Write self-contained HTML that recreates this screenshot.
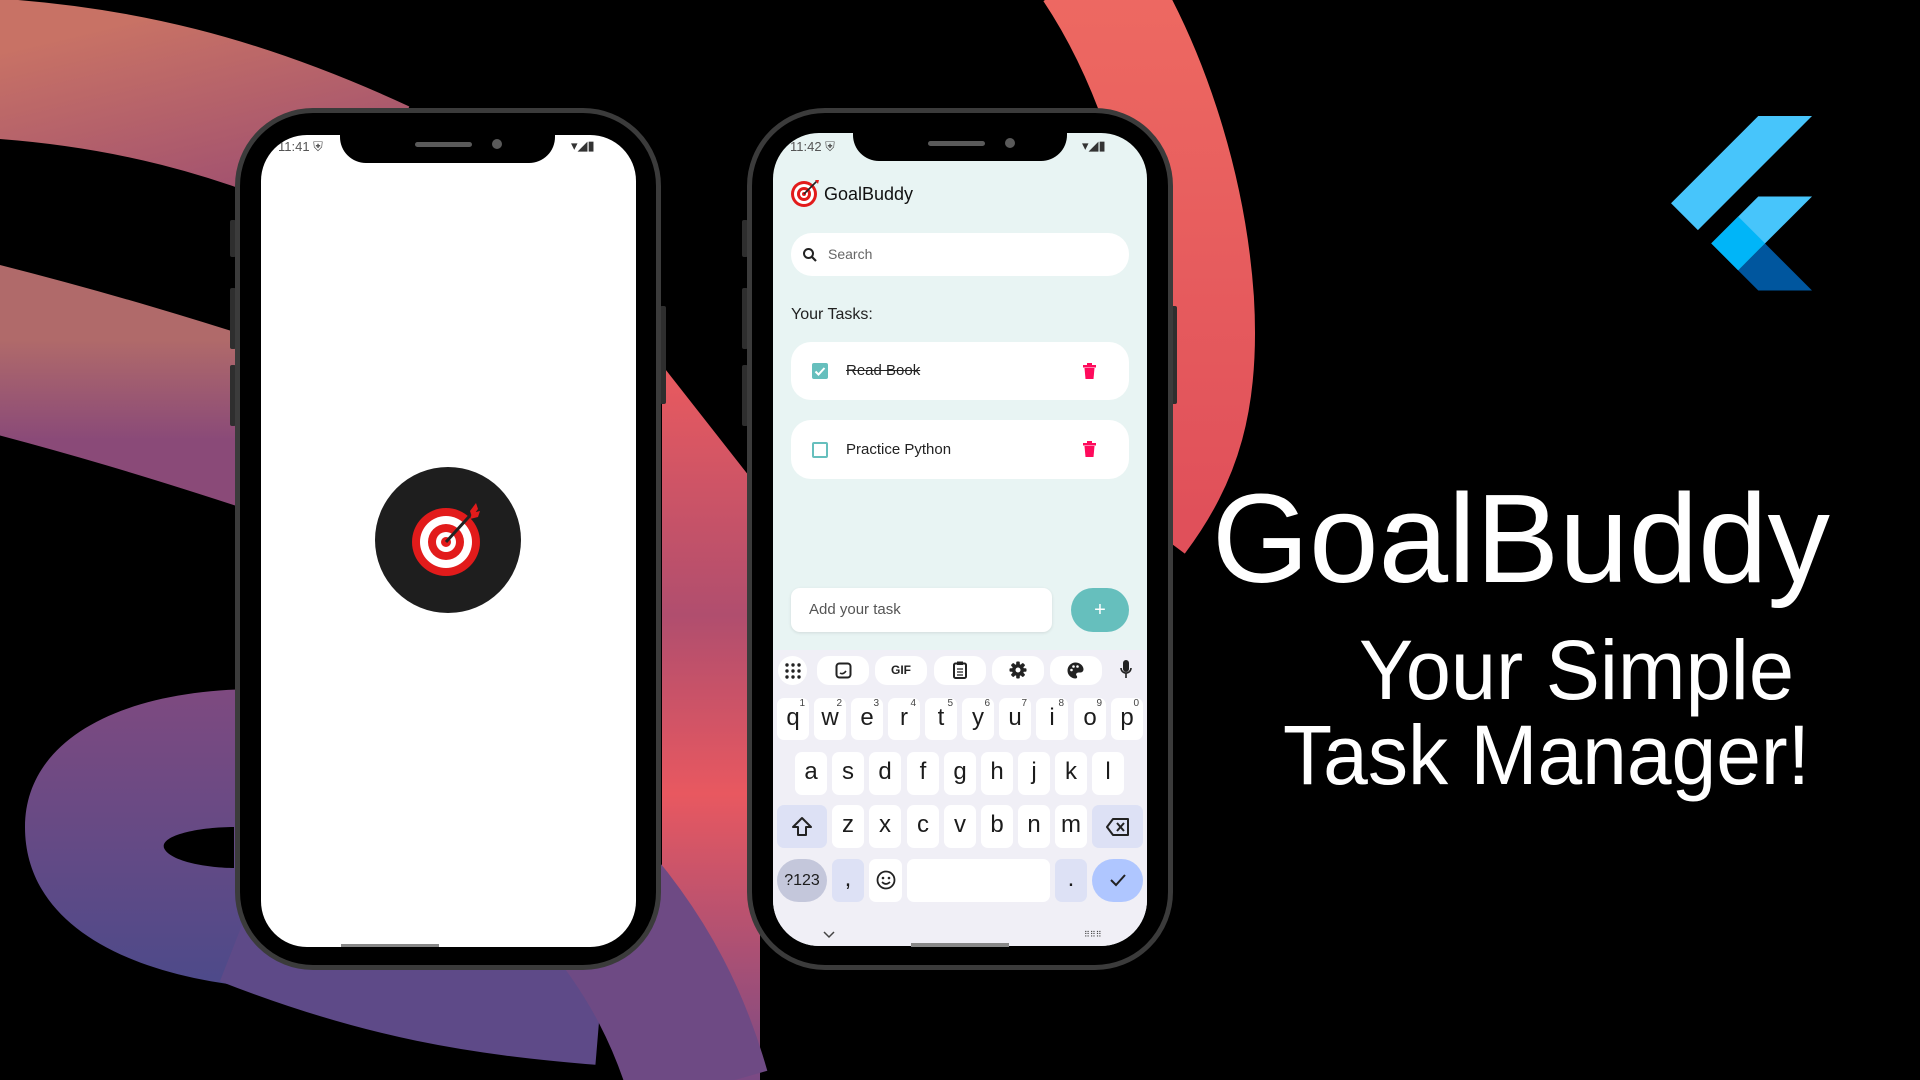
<!DOCTYPE html>
<html><head><meta charset="utf-8"><style>
*{margin:0;padding:0;box-sizing:border-box}
body{width:1920px;height:1080px;background:#000;position:relative;overflow:hidden;font-family:"Liberation Sans",sans-serif}
.abs{position:absolute;white-space:nowrap}
.phone{position:absolute;border:5px solid #3b3b3b;background:#000;border-radius:78px}
.btn{position:absolute;background:#2e2e2e;border-radius:2px}
.screen{position:absolute;overflow:hidden;border-radius:46px}
.notch{position:absolute;background:#000;border-radius:0 0 26px 26px}
.st{position:absolute;font-size:13px;color:#555;white-space:nowrap}
.key{position:absolute;background:#fff;border-radius:7px;text-align:center;font-size:24px;color:#1c1c1c;line-height:40px}
.key sup{position:absolute;top:1px;right:4px;font-size:10px;line-height:10px;color:#444}
.pill{position:absolute;background:#fff;border-radius:12px;top:656px;height:29px}
</style></head><body>
<svg class="abs" style="left:0;top:0" width="1920" height="1080">
<defs>
<linearGradient id="g1" x1="0" y1="0" x2="1" y2="1"><stop offset="0" stop-color="#c87265"/><stop offset="1" stop-color="#a05070"/></linearGradient>
<linearGradient id="g2" x1="0" y1="0" x2="0" y2="1"><stop offset="0" stop-color="#b06a6a"/><stop offset="1" stop-color="#8a4a78"/></linearGradient>
<linearGradient id="g3" x1="0" y1="0" x2="0" y2="1"><stop offset="0" stop-color="#7e4a80"/><stop offset="1" stop-color="#4c4a8a"/></linearGradient>
<linearGradient id="g4" x1="0" y1="0" x2="0" y2="1"><stop offset="0" stop-color="#ee6a62"/><stop offset="1" stop-color="#e0505a"/></linearGradient>
<linearGradient id="g5" x1="0" y1="0" x2="0" y2="1"><stop offset="0" stop-color="#ea5a5e"/><stop offset=".35" stop-color="#b04e6e"/><stop offset=".6" stop-color="#e85860"/><stop offset="1" stop-color="#7a4a84"/></linearGradient>
</defs>
<path d="M-60,66 C120,70 250,110 380,170" stroke="url(#g1)" stroke-width="140" fill="none"/>
<path d="M-40,340 C80,370 180,400 300,440" stroke="url(#g2)" stroke-width="165" fill="none"/>
<path fill-rule="evenodd" fill="url(#g3)" d="M260,689 C120,689 25,740 25,827 C25,930 140,985 300,990 L300,689Z M234,827 C200,827 160,835 164,848 C170,862 210,868 234,868Z"/>
<path d="M240,930 C380,985 480,1000 600,1010" stroke="#5e4a88" stroke-width="110" fill="none"/>
<path d="M662,365 L760,490 L760,1080 L662,1080Z" fill="url(#g5)"/>
<path d="M600,900 C650,960 680,1020 700,1090" stroke="#6e4a84" stroke-width="140" fill="none"/>
<path d="M1090,-30 C1150,60 1190,184 1198,300 C1204,400 1185,460 1140,520" stroke="url(#g4)" stroke-width="112" fill="none"/>
</svg>

<!-- Phone 1 -->
<div class="btn" style="left:230px;top:220px;width:6px;height:37px"></div>
<div class="btn" style="left:230px;top:288px;width:6px;height:61px"></div>
<div class="btn" style="left:230px;top:365px;width:6px;height:61px"></div>
<div class="btn" style="left:660px;top:306px;width:6px;height:98px"></div>
<div class="phone" style="left:235px;top:108px;width:426px;height:862px"></div>
<div class="screen" style="left:261px;top:135px;width:375px;height:812px;background:#fff">
 <div class="st" style="left:17px;top:4px">11:41 &#x26E8;</div>
 <div class="notch" style="left:79px;top:-2px;width:215px;height:30px"></div>
 <div class="abs" style="left:154px;top:7px;width:57px;height:5px;border-radius:3px;background:#5a5a5a"></div>
 <div class="abs" style="left:231px;top:4px;width:10px;height:10px;border-radius:5px;background:#5a5a5a"></div>
 <div class="st" style="left:310px;top:3px;color:#333">▾◢▮</div>
 <div class="abs" style="left:80px;top:809px;width:98px;height:4px;background:#888"></div>
 <svg class="abs" style="left:114px;top:332px" width="146" height="146">
  <circle cx="73" cy="73" r="73" fill="#1e1e1e"/>
  <circle cx="71" cy="75" r="34" fill="#e21b1b"/><circle cx="71" cy="75" r="26" fill="#fff"/>
  <circle cx="71" cy="75" r="18" fill="#e21b1b"/><circle cx="71" cy="75" r="10" fill="#fff"/>
  <circle cx="71" cy="75" r="5" fill="#e21b1b"/>
  <line x1="71" y1="75" x2="101" y2="42" stroke="#222" stroke-width="3"/>
  <path d="M95,44 l6,-8 l2,6 l-6,8z M97,46 l8,-2 l-2,6 l-8,2z" fill="#e21b1b"/>
 </svg>
</div>

<!-- Phone 2 -->
<div class="btn" style="left:742px;top:220px;width:6px;height:37px"></div>
<div class="btn" style="left:742px;top:288px;width:6px;height:61px"></div>
<div class="btn" style="left:742px;top:365px;width:6px;height:61px"></div>
<div class="btn" style="left:1171px;top:306px;width:6px;height:98px"></div>
<div class="phone" style="left:747px;top:108px;width:426px;height:862px"></div>
<div class="screen" style="left:773px;top:133px;width:374px;height:813px;background:#e8f4f3"></div>
<div class="abs" style="left:0;top:0;width:1920px;height:1080px">
 <div class="st" style="left:790px;top:139px">11:42 &#x26E8;</div>
 <div class="notch" style="left:853px;top:128px;width:214px;height:33px"></div>
 <div class="abs" style="left:928px;top:141px;width:57px;height:5px;border-radius:3px;background:#5a5a5a"></div>
 <div class="abs" style="left:1005px;top:138px;width:10px;height:10px;border-radius:5px;background:#5a5a5a"></div>
 <div class="st" style="left:1082px;top:138px;color:#333">▾◢▮</div>
 <svg class="abs" style="left:790px;top:179px" width="30" height="30">
  <circle cx="14" cy="15" r="13" fill="#e21b1b"/><circle cx="14" cy="15" r="10" fill="#fff"/>
  <circle cx="14" cy="15" r="7" fill="#e21b1b"/><circle cx="14" cy="15" r="4" fill="#fff"/><circle cx="14" cy="15" r="2" fill="#e21b1b"/>
  <line x1="14" y1="15" x2="27" y2="2" stroke="#222" stroke-width="1.6"/><path d="M25,1 l4,0 l-1,4z" fill="#e21b1b"/>
 </svg>
 <div class="abs" style="left:824px;top:184px;font-size:18px;color:#111">GoalBuddy</div>
 <div class="abs" style="left:791px;top:233px;width:338px;height:43px;border-radius:21px;background:#fff"></div>
 <svg class="abs" style="left:802px;top:247px" width="16" height="16"><circle cx="6.5" cy="6.5" r="4.5" stroke="#222" stroke-width="2" fill="none"/><line x1="10" y1="10" x2="14" y2="14" stroke="#222" stroke-width="2.2"/></svg>
 <div class="abs" style="left:828px;top:246px;font-size:14px;color:#666">Search</div>
 <div class="abs" style="left:791px;top:306px;font-size:16px;color:#222">Your Tasks:</div>
 <div class="abs" style="left:791px;top:342px;width:338px;height:58px;border-radius:20px;background:#fff"></div>
 <div class="abs" style="left:812px;top:363px;width:16px;height:16px;border-radius:2px;background:#66bfbd"></div>
 <svg class="abs" style="left:812px;top:363px" width="16" height="16"><path d="M3.5,8.5 l3,3 l6,-6.5" stroke="#fff" stroke-width="2" fill="none"/></svg>
 <div class="abs" style="left:846px;top:362px;font-size:15px;color:#222;text-decoration:line-through">Read Book</div>
 <svg class="abs" style="left:1083px;top:363px" width="13" height="17"><rect x="0" y="2" width="13" height="2.5" fill="#ff0a5c"/><rect x="4" y="0" width="5" height="3" fill="#ff0a5c"/><path d="M1.5,5 h10 l-1,11 h-8z" fill="#ff0a5c"/></svg>
 <div class="abs" style="left:791px;top:420px;width:338px;height:59px;border-radius:20px;background:#fff"></div>
 <div class="abs" style="left:812px;top:442px;width:16px;height:16px;border-radius:2px;border:2px solid #66bfbd"></div>
 <div class="abs" style="left:846px;top:441px;font-size:15px;color:#222">Practice Python</div>
 <svg class="abs" style="left:1083px;top:441px" width="13" height="17"><rect x="0" y="2" width="13" height="2.5" fill="#ff0a5c"/><rect x="4" y="0" width="5" height="3" fill="#ff0a5c"/><path d="M1.5,5 h10 l-1,11 h-8z" fill="#ff0a5c"/></svg>
 <div class="abs" style="left:791px;top:588px;width:261px;height:44px;border-radius:9px;background:#fff;box-shadow:0 1px 3px rgba(0,0,0,.1)"></div>
 <div class="abs" style="left:809px;top:601px;font-size:15px;color:#555">Add your task</div>
 <div class="abs" style="left:1071px;top:588px;width:58px;height:44px;border-radius:22px;background:#66bfbd;color:#fff;text-align:center;font-size:20px;line-height:44px">+</div>
 <!-- keyboard -->
 <div class="abs" style="left:773px;top:650px;width:374px;height:296px;background:#f0eff6;border-radius:0 0 46px 46px"></div>
 <div class="abs" style="left:778px;top:656px;width:29px;height:29px;border-radius:15px;background:#fff"></div>
 <svg class="abs" style="left:785px;top:663px" width="16" height="16" fill="#222"><circle cx="2" cy="2" r="1.7"/><circle cx="8" cy="2" r="1.7"/><circle cx="14" cy="2" r="1.7"/><circle cx="2" cy="8" r="1.7"/><circle cx="8" cy="8" r="1.7"/><circle cx="14" cy="8" r="1.7"/><circle cx="2" cy="14" r="1.7"/><circle cx="8" cy="14" r="1.7"/><circle cx="14" cy="14" r="1.7"/></svg>
 <div class="pill" style="left:817px;width:52px"></div>
 <svg class="abs" style="left:835px;top:662px" width="17" height="17"><rect x="1.5" y="1.5" width="14" height="14" rx="3" stroke="#222" stroke-width="2" fill="none"/><path d="M5,11 q3,2 6,-2" stroke="#222" stroke-width="1.6" fill="none"/></svg>
 <div class="pill" style="left:875px;width:52px;font-size:12px;font-weight:bold;text-align:center;line-height:29px;color:#222">GIF</div>
 <div class="pill" style="left:934px;width:52px"></div>
 <svg class="abs" style="left:953px;top:661px" width="14" height="18"><rect x="1" y="2.5" width="12" height="14.5" rx="1.5" stroke="#222" stroke-width="2" fill="none"/><rect x="4" y="0.5" width="6" height="3.5" fill="#222"/><path d="M4,8h6M4,11h6M4,14h6" stroke="#222" stroke-width="1.3"/></svg>
 <div class="pill" style="left:992px;width:52px"></div>
 <svg class="abs" style="left:1009px;top:661px" width="18" height="18"><g fill="#222"><circle cx="9" cy="9" r="6"/><rect x="7.2" y="0.5" width="3.6" height="17" rx="1"/><rect x="0.5" y="7.2" width="17" height="3.6" rx="1"/><rect x="7.2" y="0.5" width="3.6" height="17" rx="1" transform="rotate(45 9 9)"/><rect x="7.2" y="0.5" width="3.6" height="17" rx="1" transform="rotate(-45 9 9)"/></g><circle cx="9" cy="9" r="2.5" fill="#fff"/></svg>
 <div class="pill" style="left:1050px;width:52px"></div>
 <svg class="abs" style="left:1067px;top:662px" width="17" height="17"><path d="M8.5,0.5 a8,8 0 0 0 0,16 c2,0 2,-2 1,-3 c-1,-1 0,-3 2,-3 h2 a3,3 0 0 0 3,-3 c0,-4 -4,-7 -8,-7z" fill="#222"/><circle cx="4.5" cy="8" r="1.3" fill="#fff"/><circle cx="6.5" cy="4.5" r="1.3" fill="#fff"/><circle cx="10.5" cy="4.5" r="1.3" fill="#fff"/></svg>
 <svg class="abs" style="left:1120px;top:660px" width="12" height="20"><rect x="3" y="0" width="6" height="12" rx="3" fill="#222"/><path d="M1,8 a5,5 0 0 0 10,0" stroke="#222" stroke-width="1.6" fill="none"/><line x1="6" y1="13" x2="6" y2="18" stroke="#222" stroke-width="1.6"/></svg>

 <div class="key" style="left:777px;top:698px;width:32px;height:42px">q<sup>1</sup></div>
 <div class="key" style="left:814px;top:698px;width:32px;height:42px">w<sup>2</sup></div>
 <div class="key" style="left:851px;top:698px;width:32px;height:42px">e<sup>3</sup></div>
 <div class="key" style="left:888px;top:698px;width:32px;height:42px">r<sup>4</sup></div>
 <div class="key" style="left:925px;top:698px;width:32px;height:42px">t<sup>5</sup></div>
 <div class="key" style="left:962px;top:698px;width:32px;height:42px">y<sup>6</sup></div>
 <div class="key" style="left:999px;top:698px;width:32px;height:42px">u<sup>7</sup></div>
 <div class="key" style="left:1036px;top:698px;width:32px;height:42px">i<sup>8</sup></div>
 <div class="key" style="left:1074px;top:698px;width:32px;height:42px">o<sup>9</sup></div>
 <div class="key" style="left:1111px;top:698px;width:32px;height:42px">p<sup>0</sup></div>

 <div class="key" style="left:795px;top:752px;width:32px;height:43px">a</div>
 <div class="key" style="left:832px;top:752px;width:32px;height:43px">s</div>
 <div class="key" style="left:869px;top:752px;width:32px;height:43px">d</div>
 <div class="key" style="left:907px;top:752px;width:32px;height:43px">f</div>
 <div class="key" style="left:944px;top:752px;width:32px;height:43px">g</div>
 <div class="key" style="left:981px;top:752px;width:32px;height:43px">h</div>
 <div class="key" style="left:1018px;top:752px;width:32px;height:43px">j</div>
 <div class="key" style="left:1055px;top:752px;width:32px;height:43px">k</div>
 <div class="key" style="left:1092px;top:752px;width:32px;height:43px">l</div>

 <div class="key" style="left:777px;top:805px;width:50px;height:43px;background:#dde1f5"></div>
 <svg class="abs" style="left:791px;top:816px" width="22" height="21"><path d="M11,2 L20,11 H15 V19 H7 V11 H2Z" stroke="#222" stroke-width="2" fill="none" stroke-linejoin="round"/></svg>
 <div class="key" style="left:832px;top:805px;width:32px;height:43px">z</div>
 <div class="key" style="left:869px;top:805px;width:32px;height:43px">x</div>
 <div class="key" style="left:907px;top:805px;width:32px;height:43px">c</div>
 <div class="key" style="left:944px;top:805px;width:32px;height:43px">v</div>
 <div class="key" style="left:981px;top:805px;width:32px;height:43px">b</div>
 <div class="key" style="left:1018px;top:805px;width:32px;height:43px">n</div>
 <div class="key" style="left:1055px;top:805px;width:32px;height:43px">m</div>
 <div class="key" style="left:1092px;top:805px;width:51px;height:43px;background:#dde1f5"></div>
 <svg class="abs" style="left:1106px;top:818px" width="24" height="18"><path d="M7,1 H22 V17 H7 L1,9Z" stroke="#222" stroke-width="2" fill="none" stroke-linejoin="round"/><path d="M11,5 l7,8 M18,5 l-7,8" stroke="#222" stroke-width="2"/></svg>

 <div class="key" style="left:777px;top:859px;width:50px;height:43px;background:#c4c7db;border-radius:22px;font-size:16px;line-height:43px">?123</div>
 <div class="key" style="left:832px;top:859px;width:32px;height:43px;background:#dde1f5">,</div>
 <div class="key" style="left:869px;top:859px;width:33px;height:43px"></div>
 <svg class="abs" style="left:876px;top:870px" width="20" height="20"><circle cx="10" cy="10" r="8.5" stroke="#222" stroke-width="1.8" fill="none"/><circle cx="7" cy="8" r="1.3" fill="#222"/><circle cx="13" cy="8" r="1.3" fill="#222"/><path d="M6,12 q4,4 8,0" stroke="#222" stroke-width="1.6" fill="none"/></svg>
 <div class="key" style="left:907px;top:859px;width:143px;height:43px"></div>
 <div class="key" style="left:1055px;top:859px;width:32px;height:43px;background:#dde1f5">.</div>
 <div class="key" style="left:1092px;top:859px;width:51px;height:43px;background:#afc6ff;border-radius:22px"></div>
 <svg class="abs" style="left:1109px;top:872px" width="18" height="16"><path d="M2,8 l5,5 l9,-10" stroke="#222" stroke-width="2" fill="none"/></svg>
 <svg class="abs" style="left:823px;top:931px" width="12" height="8"><path d="M1,1 l5,5 l5,-5" stroke="#444" stroke-width="1.5" fill="none"/></svg>
 <div class="abs" style="left:1084px;top:930px;font-size:8px;color:#444">⠿⠿⠿</div>
 <div class="abs" style="left:911px;top:943px;width:98px;height:4px;background:#888"></div>
</div>

<!-- Flutter logo + title -->
<svg class="abs" style="left:0;top:0" width="1920" height="1080">
 <g transform="translate(1661.6,106) scale(0.963)">
  <path fill="#47C5FB" d="M37.7 128.9 9.8 101 100.4 10.4h55.8zM156.2 94h-55.8l-48.8 48.6 27.9 27.9z"/>
  <path fill="#00569E" d="M79.5 170.7l20.9 20.9h55.8l-48.8-48.8z"/>
  <path fill="#00B5F8" d="M51.6 142.6l27.9-27.9 27.9 27.9-27.9 28.1z"/>
 </g>
 <text x="1212" y="582" font-family="Liberation Sans, sans-serif" font-size="126" fill="#fff" textLength="618" lengthAdjust="spacingAndGlyphs">GoalBuddy</text>
 <text x="1359" y="699" font-family="Liberation Sans, sans-serif" font-size="84" fill="#fff" textLength="435" lengthAdjust="spacingAndGlyphs">Your Simple</text>
 <text x="1283" y="784" font-family="Liberation Sans, sans-serif" font-size="84" fill="#fff" textLength="527" lengthAdjust="spacingAndGlyphs">Task Manager!</text>
</svg>
</body></html>
